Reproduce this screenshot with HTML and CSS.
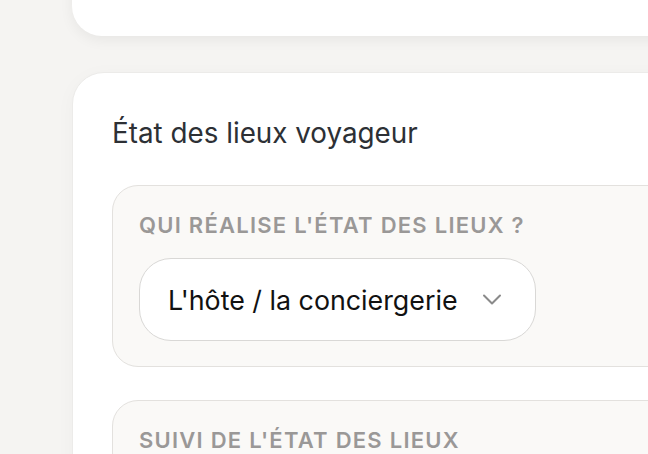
FILE: index.html
```html
<!DOCTYPE html>
<html lang="fr">
<head>
<meta charset="utf-8">
<link rel="stylesheet" href="styles.css">
</head>
<body>
<div class="page">
  <div class="card card-top"></div>
  <section class="card card-main">
    <h2 class="card-title">État des lieux voyageur</h2>
    <div class="field-box">
      <div class="field-label">Qui réalise l'état des lieux ?</div>
      <div class="select">
        <span class="select-value">L'hôte / la conciergerie</span>
        <svg class="chevron" width="20" height="12" viewBox="0 0 20 12"><path d="M2 1.5 L10 9.5 L18 1.5" fill="none" stroke="#8a8a8a" stroke-width="2" stroke-linecap="round" stroke-linejoin="round"/></svg>
      </div>
    </div>
    <div class="field-box">
      <div class="field-label">Suivi de l'état des lieux</div>
    </div>
  </section>
</div>
</body>
</html>
```
FILE: styles.css
```css
html, body {
  margin: 0;
  padding: 0;
}
body {
  background: #f5f4f2;
  font-family: Inter, "Noto Sans", sans-serif;
  width: 648px;
  height: 454px;
  overflow: hidden;
}
.page {
  padding-left: 72px;
  display: flex;
  flex-direction: column;
  gap: 36px;
}
.card {
  background: #fff;
  width: 700px;
  box-sizing: border-box;
}
.card-top {
  height: 100px;
  margin-top: -64px;
  border-radius: 30px;
  box-shadow: 0 4px 14px rgba(0, 0, 0, 0.06);
}
.card-main {
  border: 1px solid #ecebe9;
  border-radius: 32px;
  padding: 43px 39px 40px;
  display: flex;
  flex-direction: column;
  gap: 35px;
  box-shadow: 0 4px 20px rgba(0, 0, 0, 0.03);
}
.card-title {
  margin: 0;
  font-size: 27.8px;
  line-height: 34px;
  font-weight: 400;
  color: #2d3035;
}
.field-box {
  border: 1px solid #e3e1de;
  background: #faf9f7;
  border-radius: 26px;
  padding: 26px 26px 25px;
  display: flex;
  flex-direction: column;
  gap: 20px;
}
.field-box + .field-box {
  margin-top: -2px;
}
.field-label {
  font-size: 22px;
  line-height: 26px;
  font-weight: 600;
  letter-spacing: 1.25px;
  text-transform: uppercase;
  color: #9a9897;
}
.select {
  align-self: flex-start;
  width: 397px;
  height: 83px;
  box-sizing: border-box;
  border: 1.5px solid #d9d8d6;
  border-radius: 32px;
  background: #fff;
  display: flex;
  align-items: center;
  justify-content: space-between;
  padding: 0 33px 0 28px;
}
.select-value {
  font-size: 26.8px;
  color: #111;
}
.chevron {
  display: block;
}
```
